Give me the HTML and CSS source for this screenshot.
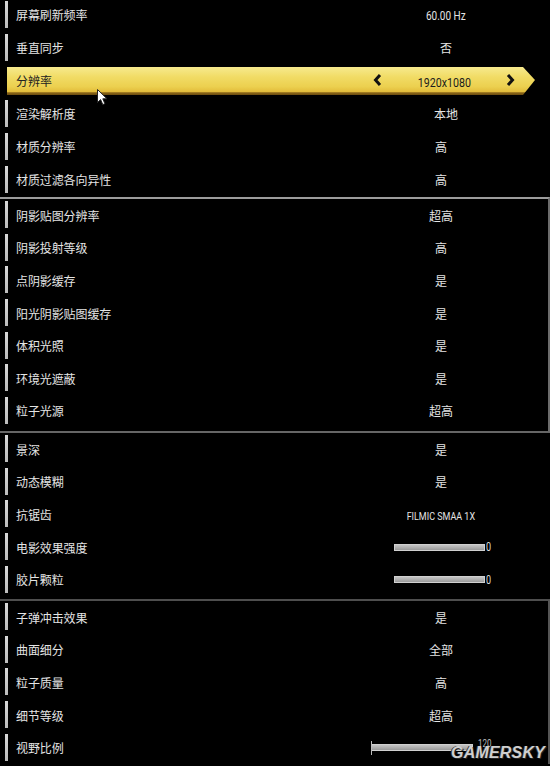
FILE: index.html
```html
<!DOCTYPE html>
<html lang="zh-CN">
<head>
<meta charset="utf-8">
<title>图形设置</title>
<link rel="stylesheet" href="styles.css">
</head>
<body>
<div class="screen">
  <div class="group g1">
    <div class="row"><i class="mk"></i><span class="label">屏幕刷新频率</span><span class="value shift"><span class="num">60.00 Hz</span></span></div>
    <div class="row"><i class="mk"></i><span class="label">垂直同步</span><span class="value shift">否</span></div>
    <div class="row">
      <div class="hl">
        <span class="hl-label">分辨率</span>
        <svg class="chev" viewBox="0 0 14 14" width="14" height="14"><polyline points="9,2 4.5,7 9,12" fill="none" stroke="#111" stroke-width="3"/></svg>
        <span class="hl-value"><span class="num big">1920x1080</span></span>
        <svg class="chev" viewBox="0 0 14 14" width="14" height="14"><polyline points="5,2 9.5,7 5,12" fill="none" stroke="#111" stroke-width="3"/></svg>
      </div>
    </div>
    <div class="row"><i class="mk"></i><span class="label">渲染解析度</span><span class="value shift">本地</span></div>
    <div class="row"><i class="mk"></i><span class="label">材质分辨率</span><span class="value">高</span></div>
    <div class="row"><i class="mk"></i><span class="label">材质过滤各向异性</span><span class="value">高</span></div>
  </div>
  <div class="group g2">
    <div class="row"><i class="mk"></i><span class="label">阴影贴图分辨率</span><span class="value">超高</span></div>
    <div class="row"><i class="mk"></i><span class="label">阴影投射等级</span><span class="value">高</span></div>
    <div class="row"><i class="mk"></i><span class="label">点阴影缓存</span><span class="value">是</span></div>
    <div class="row"><i class="mk"></i><span class="label">阳光阴影贴图缓存</span><span class="value">是</span></div>
    <div class="row"><i class="mk"></i><span class="label">体积光照</span><span class="value">是</span></div>
    <div class="row"><i class="mk"></i><span class="label">环境光遮蔽</span><span class="value">是</span></div>
    <div class="row"><i class="mk"></i><span class="label">粒子光源</span><span class="value">超高</span></div>
  </div>
  <div class="group g3">
    <div class="row"><i class="mk"></i><span class="label">景深</span><span class="value">是</span></div>
    <div class="row"><i class="mk"></i><span class="label">动态模糊</span><span class="value">是</span></div>
    <div class="row"><i class="mk"></i><span class="label">抗锯齿</span><span class="value"><span class="num small">FILMIC SMAA 1X</span></span></div>
    <div class="row"><i class="mk"></i><span class="label">电影效果强度</span><span class="value slider-cell"><span class="track"></span><span class="num sv">0</span></span></div>
    <div class="row"><i class="mk"></i><span class="label">胶片颗粒</span><span class="value slider-cell"><span class="track"></span><span class="num sv">0</span></span></div>
  </div>
  <div class="group g4">
    <div class="row"><i class="mk"></i><span class="label">子弹冲击效果</span><span class="value">是</span></div>
    <div class="row"><i class="mk"></i><span class="label">曲面细分</span><span class="value">全部</span></div>
    <div class="row"><i class="mk"></i><span class="label">粒子质量</span><span class="value">高</span></div>
    <div class="row"><i class="mk"></i><span class="label">细节等级</span><span class="value">超高</span></div>
    <div class="row"><i class="mk"></i><span class="label">视野比例</span><span class="value slider-cell wide"><span class="tick"></span><span class="track long"></span><span class="num sv2">120</span></span></div>
  </div>

  <svg class="cursor" viewBox="0 0 12 17" width="12" height="17"><path d="M0.5 0.5 L0.5 13.5 L3.6 10.6 L5.8 15.6 L7.9 14.7 L5.8 9.8 L10 9.8 Z" fill="#fff" stroke="#222" stroke-width="1"/></svg>
  <div class="watermark">GAMERSKY</div>
</div>
</body>
</html>
```
FILE: styles.css
```css
html, body {
  margin: 0;
  padding: 0;
  background: #000;
}
body {
  width: 550px;
  height: 766px;
  overflow: hidden;
  font-family: "Noto Sans CJK SC", "Noto Sans", sans-serif;
  color: #e2e2e2;
}
.screen {
  position: relative;
  width: 550px;
  height: 766px;
  overflow: hidden;
}
.group .row {
  display: grid;
  grid-template-columns: 16px 325px 200px 1fr;
  align-items: center;
  height: 32.6px;
}
.g1 {
  margin-top: -2px;
  padding-bottom: 1px;
}
.g1 .row { height: 33px; }
.g2 {
  border-top: 2px solid #9c9c9c;
  border-right: 2px solid #6c6c6c;
  border-bottom: 2px solid #666;
  padding-bottom: 3.8px;
}
.g3 {
  padding-bottom: 3px;
}
.g4 {
  border-top: 2px solid #4e4e4e;
  border-right: 2px solid #555;
}
.mk {
  display: block;
  width: 3px;
  height: 27px;
  margin-left: 5px;
  margin-top: -1px;
  background: linear-gradient(#d8d8d8, #bcbcbc);
}
.label {
  font-size: 12px;
  letter-spacing: -0.1px;
  color: #e4e4e4;
  white-space: nowrap;
}
.value {
  font-size: 12px;
  text-align: center;
  color: #e4e4e4;
  white-space: nowrap;
}
.value.shift { padding-left: 10px; }
.num {
  display: inline-block;
  font-family: Roboto, "Liberation Sans", sans-serif;
  font-size: 12.5px;
  transform: scaleX(0.8);
  letter-spacing: 0;
}
.num.big {
  font-size: 13px;
  transform: scaleX(0.82);
}
.num.small {
  font-size: 11.5px;
  transform: scaleX(0.78);
}
.slider-cell {
  display: flex;
  align-items: center;
  padding-left: 53px;
  text-align: left;
}
.track {
  display: block;
  width: 89px;
  height: 5px;
  border: 1px solid #d0d0d0;
  background: linear-gradient(#c4c4c4, #9a9a9a);
}
.sv {
  margin-left: 1px;
  font-size: 12px;
  transform: scaleX(0.75);
  transform-origin: left center;
  color: #ddd;
}
.slider-cell.wide { padding-left: 30px; }
.tick {
  display: block;
  width: 1px;
  height: 14px;
  background: #bbb;
}
.track.long {
  width: 100px;
  height: 5px;
  border-left: 0;
}
.sv2 {
  margin-left: 5px;
  margin-top: -8px;
  font-size: 10px;
  line-height: 10px;
  color: #bbb;
  transform: scaleX(0.8);
  transform-origin: left center;
}
.hl {
  grid-column: 1 / -1;
  display: flex;
  align-items: center;
  height: 28px;
  margin: 3px 15px 2px 7px;
  background: linear-gradient(#f7ea8e 0%, #f1dc66 35%, #ecd04f 70%, #e3bd3c 88%, #8b6618 92%, #6b4c10 100%);
  clip-path: polygon(0 0, calc(100% - 12px) 0, 100% 46%, calc(100% - 12px) 100%, 0 100%);
  color: #1a1a1a;
}
.hl-label {
  width: 364px;
  box-sizing: border-box;
  padding-left: 9px;
  font-size: 12px;
  color: #222;
  margin-top: -2px;
}
.chev { flex: none; margin-top: -2px; }
.hl-value {
  width: 118px;
  text-align: center;
  color: #1c1c1c;
  margin-top: -2px;
}
.cursor {
  position: absolute;
  left: 97px;
  top: 89px;
}
.watermark {
  position: absolute;
  left: 451px;
  top: 746px;
  font-family: "Liberation Sans", Arial, sans-serif;
  font-weight: bold;
  font-style: italic;
  font-size: 16px;
  line-height: 14px;
  letter-spacing: 0.2px;
  color: #cfcfcf;
  text-shadow: 1px 1px 0 #222, -1px 0 0 #333;
}
```
